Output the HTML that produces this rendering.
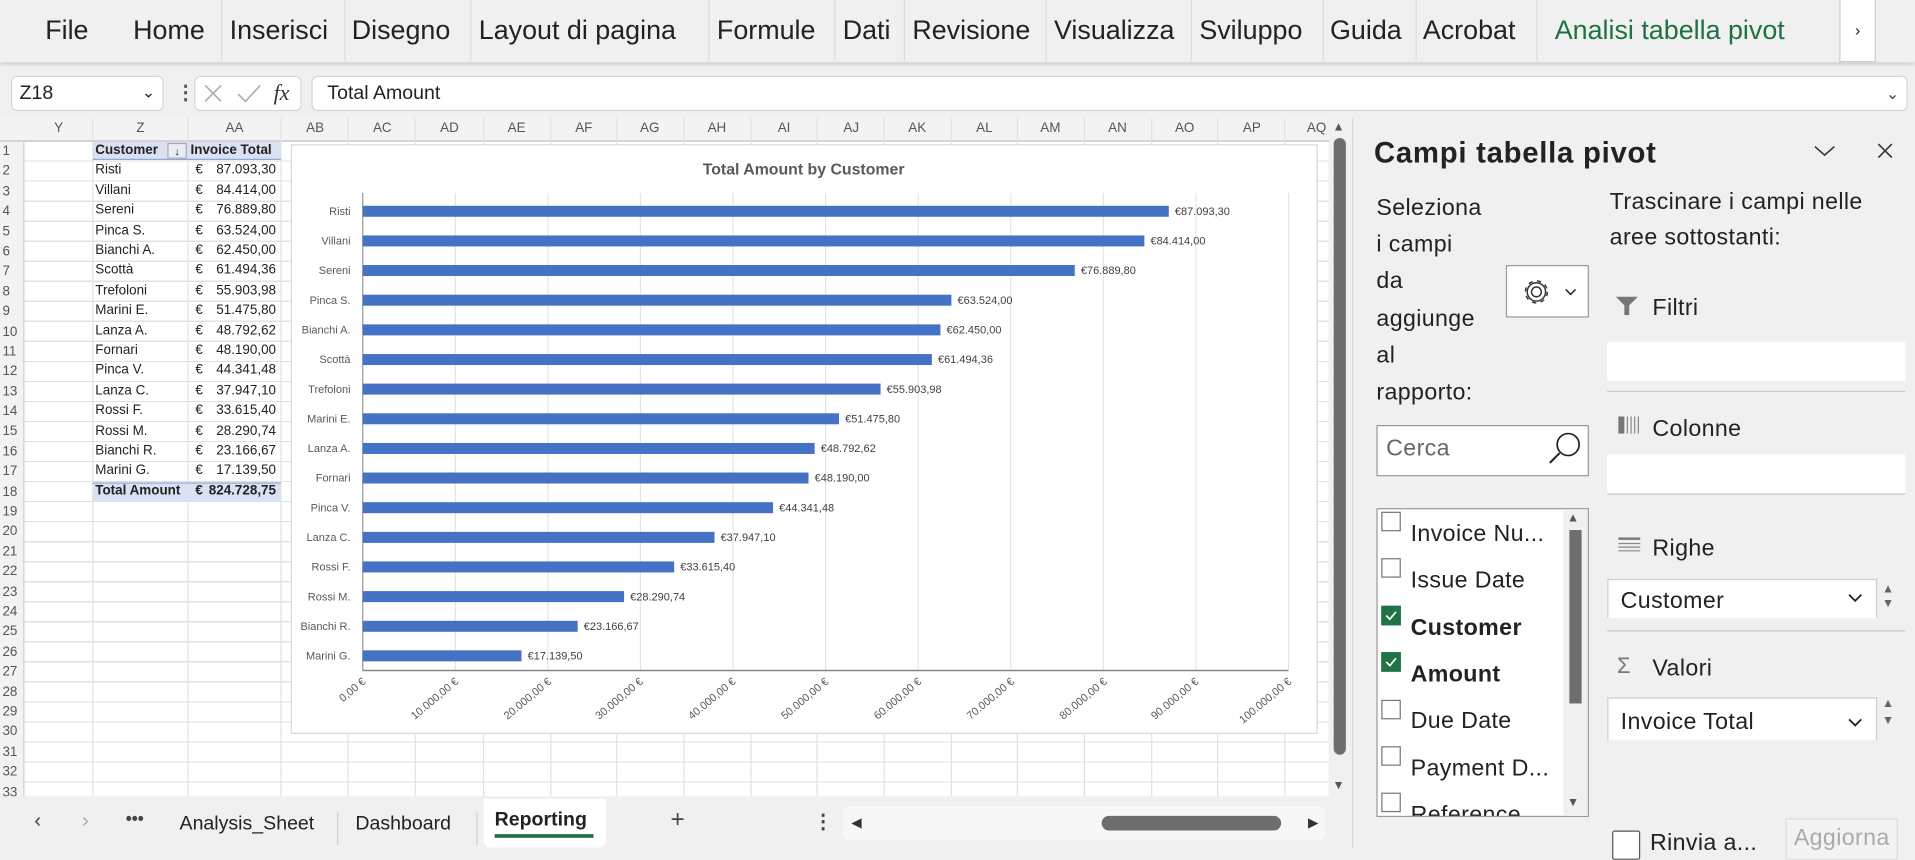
<!DOCTYPE html>
<html><head><meta charset="utf-8"><style>
*{margin:0;padding:0;box-sizing:border-box}
html,body{width:1915px;height:847px;overflow:hidden;background:#f0f0f0}
#w{position:absolute;left:0;top:0;width:1568px;height:694px;transform:scale(1.22131);transform-origin:0 0;font-family:"Liberation Sans",sans-serif;color:#222;background:#f0f0f0}
.a{position:absolute}
.tab{position:absolute;top:12px;font-size:22px;color:#222;white-space:nowrap}
.sep{position:absolute;top:0;width:1px;height:50px;background:#dcdcdc}
.ch{position:absolute;top:99px;font-size:11px;color:#555;width:50px;text-align:center;margin-left:-25px}
.rn{height:16.4px;font-size:11px;color:#555;line-height:16.4px;padding-left:2px}
.cell{position:absolute;font-size:11px;height:16.4px;line-height:16.4px;white-space:nowrap}
.pt{position:absolute;font-size:19px;color:#222;white-space:nowrap;letter-spacing:.3px}
.cb{position:absolute;left:1131px;width:16px;height:16px;border:1.3px solid #777;background:#fff}
.cb.on{background:#217346;border-color:#217346}
</style></head><body><div id="w">

<!-- ribbon -->
<div class="a" style="left:0;top:0;width:1568px;height:51px;background:#f0f0f0;box-shadow:0 2px 3px rgba(0,0,0,.15)"></div>
<div class="tab" style="left:37px">File</div>
<div class="tab" style="left:109px">Home</div><div class="sep" style="left:181px"></div>
<div class="tab" style="left:188px">Inserisci</div><div class="sep" style="left:282px"></div>
<div class="tab" style="left:288px">Disegno</div><div class="sep" style="left:385px"></div>
<div class="tab" style="left:392px">Layout di pagina</div><div class="sep" style="left:580px"></div>
<div class="tab" style="left:587px">Formule</div><div class="sep" style="left:683px"></div>
<div class="tab" style="left:690px">Dati</div><div class="sep" style="left:740px"></div>
<div class="tab" style="left:747px">Revisione</div><div class="sep" style="left:856px"></div>
<div class="tab" style="left:863px">Visualizza</div><div class="sep" style="left:975px"></div>
<div class="tab" style="left:982px">Sviluppo</div><div class="sep" style="left:1083px"></div>
<div class="tab" style="left:1089px">Guida</div><div class="sep" style="left:1159px"></div>
<div class="tab" style="left:1165px">Acrobat</div><div class="sep" style="left:1258px"></div>
<div class="tab" style="left:1273px;color:#1e7145">Analisi tabella pivot</div>
<div class="a" style="left:1506px;top:0;width:30px;height:51px;background:#fff;border:1px solid #ccc;border-top:none;font-size:13px;text-align:center;line-height:50px">›</div>

<!-- formula bar -->
<div class="a" style="left:9px;top:62px;width:125px;height:29px;background:#fff;border:1px solid #d6d6d6;border-radius:5px;font-size:16px;line-height:27px;padding-left:6px">Z18<span style="position:absolute;right:6px;top:-1px;font-size:13px">&#8964;</span></div>
<div class="a" style="left:144px;top:66px;font-size:16px;color:#555;font-weight:bold">⋮</div>
<div class="a" style="left:159px;top:62px;width:88px;height:29px;background:#fff;border:1px solid #d6d6d6;border-radius:5px"></div>
<svg class="a" style="left:165px;top:68px" width="80" height="18"><path d="M3 2L16 15M16 2L3 15" stroke="#aaa" stroke-width="1.3" fill="none"/><path d="M30 9L36 15L48 2" stroke="#aaa" stroke-width="1.3" fill="none"/><text x="59" y="14" font-family="Liberation Serif" font-style="italic" font-size="18" fill="#333">fx</text></svg>
<div class="a" style="left:255px;top:62px;width:1307px;height:29px;background:#fff;border:1px solid #d6d6d6;border-radius:5px;font-size:16px;line-height:27px;padding-left:12px">Total Amount<span style="position:absolute;right:6px;top:0;font-size:13px;color:#444">&#8964;</span></div>

<!-- sheet -->
<div class="a" style="left:0;top:97px;width:1088px;height:555px;background:#fff"></div>
<div class="a" style="left:0;top:97px;width:1088px;height:19px;background:#f3f3f3;border-bottom:1px solid #bdbdbd"></div>
<div class="a" style="left:0;top:116px;width:20px;height:536px;background:#f3f3f3;border-right:1px solid #d0d0d0"></div>
<div class="a" style="left:20px;top:116px;width:1068px;height:536px;background-image:repeating-linear-gradient(to bottom,transparent 0,transparent 15.4px,#e1e1e1 15.4px,#e1e1e1 16.4px)"></div>
<div id="cols"></div>
<div class="a" style="left:0;top:116px;width:20px">
<div class="rn">1</div><div class="rn">2</div><div class="rn">3</div><div class="rn">4</div><div class="rn">5</div><div class="rn">6</div><div class="rn">7</div><div class="rn">8</div><div class="rn">9</div><div class="rn">10</div><div class="rn">11</div><div class="rn">12</div><div class="rn">13</div><div class="rn">14</div><div class="rn">15</div><div class="rn">16</div><div class="rn">17</div><div class="rn">18</div><div class="rn">19</div><div class="rn">20</div><div class="rn">21</div><div class="rn">22</div><div class="rn">23</div><div class="rn">24</div><div class="rn">25</div><div class="rn">26</div><div class="rn">27</div><div class="rn">28</div><div class="rn">29</div><div class="rn">30</div><div class="rn">31</div><div class="rn">32</div><div class="rn">33</div>
</div>
<!-- column lines -->
<svg class="a" style="left:0;top:97px" width="1088" height="555">
<g stroke="#e1e1e1" stroke-width="1">
<line x1="76" y1="0" x2="76" y2="555"/><line x1="154" y1="0" x2="154" y2="555"/><line x1="230" y1="0" x2="230" y2="555"/>
<line x1="285" y1="0" x2="285" y2="555"/><line x1="340" y1="0" x2="340" y2="555"/><line x1="396" y1="0" x2="396" y2="555"/><line x1="451" y1="0" x2="451" y2="555"/><line x1="505" y1="0" x2="505" y2="555"/><line x1="560" y1="0" x2="560" y2="555"/><line x1="615" y1="0" x2="615" y2="555"/><line x1="669" y1="0" x2="669" y2="555"/><line x1="724" y1="0" x2="724" y2="555"/><line x1="779" y1="0" x2="779" y2="555"/><line x1="833" y1="0" x2="833" y2="555"/><line x1="888" y1="0" x2="888" y2="555"/><line x1="943" y1="0" x2="943" y2="555"/><line x1="997" y1="0" x2="997" y2="555"/><line x1="1052" y1="0" x2="1052" y2="555"/>
</g></svg>
<div class="ch" style="left:48px">Y</div><div class="ch" style="left:115px">Z</div><div class="ch" style="left:192px">AA</div>
<div class="ch" style="left:258px">AB</div><div class="ch" style="left:313px">AC</div><div class="ch" style="left:368px">AD</div><div class="ch" style="left:423px">AE</div><div class="ch" style="left:478px">AF</div><div class="ch" style="left:532px">AG</div><div class="ch" style="left:587px">AH</div><div class="ch" style="left:642px">AI</div><div class="ch" style="left:697px">AJ</div><div class="ch" style="left:751px">AK</div><div class="ch" style="left:806px">AL</div><div class="ch" style="left:860px">AM</div><div class="ch" style="left:915px">AN</div><div class="ch" style="left:970px">AO</div><div class="ch" style="left:1025px">AP</div><div class="ch" style="left:1078px">AQ</div>

<!-- pivot table -->
<div class="a" style="left:76px;top:116px;width:154px;height:15.4px;background:#d9e1f2;border-bottom:1px solid #8ea9db"></div>
<div class="a" style="left:137px;top:117px;width:16px;height:13px;border:1px solid #aaa;background:#e8ecf5;font-size:9px;text-align:center;line-height:12px">↓</div>
<div class="a" style="left:76px;top:395px;width:154px;height:16.4px;background:#d9e1f2;border-top:1px solid #8ea9db"></div>
<div class="cell" style="left:78px;top:115px;font-weight:bold">Customer</div>
<div class="cell" style="left:156px;top:115px;font-weight:bold">Invoice Total</div>
<div id="tbl"></div>
<div class="a" style="left:78px;top:131.4px;font-size:11px;line-height:16.4px">Risti<br>Villani<br>Sereni<br>Pinca S.<br>Bianchi A.<br>Scottà<br>Trefoloni<br>Marini E.<br>Lanza A.<br>Fornari<br>Pinca V.<br>Lanza C.<br>Rossi F.<br>Rossi M.<br>Bianchi R.<br>Marini G.<br><b>Total Amount</b></div>
<div class="a" style="left:160px;top:131.4px;font-size:11px;line-height:16.4px">€<br>€<br>€<br>€<br>€<br>€<br>€<br>€<br>€<br>€<br>€<br>€<br>€<br>€<br>€<br>€<br><b>€</b></div>
<div class="a" style="left:166px;width:60px;text-align:right;top:131.4px;font-size:11px;line-height:16.4px">87.093,30<br>84.414,00<br>76.889,80<br>63.524,00<br>62.450,00<br>61.494,36<br>55.903,98<br>51.475,80<br>48.792,62<br>48.190,00<br>44.341,48<br>37.947,10<br>33.615,40<br>28.290,74<br>23.166,67<br>17.139,50<br><b>824.728,75</b></div>

<!-- chart -->
<svg class="a" style="left:238px;top:118px" width="842" height="484" font-family="Liberation Sans,sans-serif">
<rect x="0.5" y="0.5" width="840" height="482" fill="#fff" stroke="#d9d9d9"/>
<text x="420" y="25" text-anchor="middle" font-size="13" font-weight="bold" fill="#595959">Total Amount by Customer</text>
<g transform="translate(59,0)">
<g stroke="#e4e4e4"><line x1="75.8" y1="40" x2="75.8" y2="431"/><line x1="151.6" y1="40" x2="151.6" y2="431"/><line x1="227.4" y1="40" x2="227.4" y2="431"/><line x1="303.2" y1="40" x2="303.2" y2="431"/><line x1="379" y1="40" x2="379" y2="431"/><line x1="454.8" y1="40" x2="454.8" y2="431"/><line x1="530.6" y1="40" x2="530.6" y2="431"/><line x1="606.4" y1="40" x2="606.4" y2="431"/><line x1="682.2" y1="40" x2="682.2" y2="431"/><line x1="758" y1="40" x2="758" y2="431"/></g>
<line x1="0" y1="40" x2="0" y2="431" stroke="#999"/>
<line x1="0" y1="431" x2="758" y2="431" stroke="#888" stroke-width="1.2"/>
<g fill="#4472c4">
<rect x="0" y="50.5" width="660" height="9"/><rect x="0" y="74.8" width="640" height="9"/><rect x="0" y="99" width="583" height="9"/><rect x="0" y="123.3" width="482" height="9"/><rect x="0" y="147.6" width="473" height="9"/><rect x="0" y="171.9" width="466" height="9"/><rect x="0" y="196.1" width="424" height="9"/><rect x="0" y="220.4" width="390" height="9"/><rect x="0" y="244.7" width="370" height="9"/><rect x="0" y="268.9" width="365" height="9"/><rect x="0" y="293.2" width="336" height="9"/><rect x="0" y="317.5" width="288" height="9"/><rect x="0" y="341.7" width="255" height="9"/><rect x="0" y="366" width="214" height="9"/><rect x="0" y="390.3" width="176" height="9"/><rect x="0" y="414.5" width="130" height="9"/>
</g>
<g font-size="9" fill="#404040">
<text x="665" y="58">€87.093,30</text><text x="645" y="82.3">€84.414,00</text><text x="588" y="106.5">€76.889,80</text><text x="487" y="130.8">€63.524,00</text><text x="478" y="155.1">€62.450,00</text><text x="471" y="179.4">€61.494,36</text><text x="429" y="203.6">€55.903,98</text><text x="395" y="227.9">€51.475,80</text><text x="375" y="252.2">€48.792,62</text><text x="370" y="276.4">€48.190,00</text><text x="341" y="300.7">€44.341,48</text><text x="293" y="325">€37.947,10</text><text x="260" y="349.2">€33.615,40</text><text x="219" y="373.5">€28.290,74</text><text x="181" y="397.8">€23.166,67</text><text x="135" y="422">€17.139,50</text>
</g>
<g font-size="9" fill="#595959" text-anchor="end">
<text x="-10" y="58">Risti</text><text x="-10" y="82.3">Villani</text><text x="-10" y="106.5">Sereni</text><text x="-10" y="130.8">Pinca S.</text><text x="-10" y="155.1">Bianchi A.</text><text x="-10" y="179.4">Scottà</text><text x="-10" y="203.6">Trefoloni</text><text x="-10" y="227.9">Marini E.</text><text x="-10" y="252.2">Lanza A.</text><text x="-10" y="276.4">Fornari</text><text x="-10" y="300.7">Pinca V.</text><text x="-10" y="325">Lanza C.</text><text x="-10" y="349.2">Rossi F.</text><text x="-10" y="373.5">Rossi M.</text><text x="-10" y="397.8">Bianchi R.</text><text x="-10" y="422">Marini G.</text>
</g>
<g font-size="9" fill="#595959" text-anchor="end">
<text transform="translate(3,441) rotate(-40)">0,00 €</text>
<text transform="translate(79,441) rotate(-40)">10.000,00 €</text>
<text transform="translate(155,441) rotate(-40)">20.000,00 €</text>
<text transform="translate(230,441) rotate(-40)">30.000,00 €</text>
<text transform="translate(306,441) rotate(-40)">40.000,00 €</text>
<text transform="translate(382,441) rotate(-40)">50.000,00 €</text>
<text transform="translate(458,441) rotate(-40)">60.000,00 €</text>
<text transform="translate(534,441) rotate(-40)">70.000,00 €</text>
<text transform="translate(610,441) rotate(-40)">80.000,00 €</text>
<text transform="translate(685,441) rotate(-40)">90.000,00 €</text>
<text transform="translate(761,441) rotate(-40)">100.000,00 €</text>
</g></g></svg>

<!-- vertical scrollbar -->
<div class="a" style="left:1088px;top:97px;width:17px;height:555px;background:#f0f0f0"></div>
<div class="a" style="left:1092px;top:113px;width:10px;height:505px;background:#6e6e6e;border-radius:5px"></div>
<div class="a" style="left:1091px;top:99px;font-size:10px;color:#555">▲</div>
<div class="a" style="left:1091px;top:638px;font-size:10px;color:#555">▼</div>

<!-- bottom tabs -->
<div class="a" style="left:0;top:652px;width:1088px;height:42px;background:#f0f0f0"></div>
<div class="a" style="left:28px;top:662px;font-size:17px;color:#444">‹</div>
<div class="a" style="left:67px;top:662px;font-size:17px;color:#aaa">›</div>
<div class="a" style="left:103px;top:662px;font-size:14px;font-weight:bold;color:#444">•••</div>
<div class="a" style="left:147px;top:666px;font-size:16px">Analysis_Sheet</div>
<div class="a" style="left:276px;top:665px;width:1px;height:27px;background:#d0d0d0"></div>
<div class="a" style="left:291px;top:666px;font-size:16px">Dashboard</div>
<div class="a" style="left:390px;top:665px;width:1px;height:27px;background:#d0d0d0"></div>
<div class="a" style="left:396px;top:654px;width:100px;height:40px;background:#fff;border-radius:0 0 6px 6px"></div>
<div class="a" style="left:405px;top:663px;font-size:16px;font-weight:bold;color:#222">Reporting</div>
<div class="a" style="left:405px;top:683px;width:81px;height:3px;background:#1e7145"></div>
<div class="a" style="left:549px;top:660px;font-size:20px;color:#444">+</div>
<div class="a" style="left:666px;top:663px;font-size:16px;font-weight:bold;color:#444">⋮</div>
<div class="a" style="left:690px;top:660px;width:395px;height:28px;background:#f7f7f7;border-radius:6px"></div>
<div class="a" style="left:902px;top:668px;width:147px;height:12px;background:#6e6e6e;border-radius:6px"></div>
<div class="a" style="left:697px;top:667px;font-size:11px;color:#333">◀</div>
<div class="a" style="left:1071px;top:667px;font-size:11px;color:#333">▶</div>

<!-- pivot pane -->
<div class="a" style="left:1107px;top:97px;width:461px;height:597px;background:#f0f0f0;border-left:1px solid #d8d8d8"></div>
<div class="a" style="left:1125px;top:112px;font-size:24px;font-weight:bold;color:#222;letter-spacing:.6px">Campi tabella pivot</div>
<svg class="a" style="left:1484px;top:115px" width="70" height="20"><path d="M2 5L10 12L18 5" stroke="#333" stroke-width="1.3" fill="none"/><path d="M54 3L65 14M65 3L54 14" stroke="#333" stroke-width="1.3"/></svg>
<div class="pt" style="left:1127px;top:156px;line-height:30.2px">Seleziona<br>i campi<br>da<br>aggiunge<br>al<br>rapporto:</div>
<div class="a" style="left:1233px;top:217px;width:68px;height:43px;border:1px solid #999;background:#fff"></div>
<svg class="a" style="left:1244px;top:226px" width="52" height="26"><circle cx="14" cy="13" r="4" fill="none" stroke="#333" stroke-width="1.2"/><circle cx="14" cy="13" r="9" fill="none" stroke="#333" stroke-width="1.2" stroke-dasharray="3.5 3.6"/><circle cx="14" cy="13" r="7.5" fill="none" stroke="#333" stroke-width="1.2"/><path d="M38 11L42 15L46 11" stroke="#333" stroke-width="1.4" fill="none"/></svg>
<div class="a" style="left:1127px;top:348px;width:174px;height:42px;border:1px solid #999;background:#fff;font-size:19px;color:#666;padding:8px 0 0 7px;letter-spacing:.3px">Cerca</div>
<svg class="a" style="left:1266px;top:352px" width="32" height="32"><circle cx="18" cy="12" r="9" fill="none" stroke="#222" stroke-width="1.4"/><path d="M11 19L3 27" stroke="#222" stroke-width="1.6"/></svg>
<div class="a" style="left:1127px;top:416px;width:174px;height:253px;border:1px solid #999;background:#fff;overflow:hidden"></div>
<div class="a" style="left:1280px;top:417px;width:20px;height:251px;background:#f0f0f0"></div>
<div class="a" style="left:1285px;top:434px;width:10px;height:142px;background:#6e6e6e"></div>
<div class="a" style="left:1283px;top:419px;font-size:10px;color:#555">▲</div>
<div class="a" style="left:1283px;top:652px;font-size:10px;color:#555">▼</div>
<div class="cb" style="top:419px"></div><div class="pt" style="left:1155px;top:427px">Invoice Nu...</div>
<div class="cb" style="top:457px"></div><div class="pt" style="left:1155px;top:465px">Issue Date</div>
<div class="cb on" style="top:496px"><svg width="14" height="14" style="position:absolute;left:0;top:0"><path d="M3 7L6 10L11 4" stroke="#fff" stroke-width="1.4" fill="none"/></svg></div><div class="pt" style="left:1155px;top:504px;font-weight:bold">Customer</div>
<div class="cb on" style="top:534px"><svg width="14" height="14" style="position:absolute;left:0;top:0"><path d="M3 7L6 10L11 4" stroke="#fff" stroke-width="1.4" fill="none"/></svg></div><div class="pt" style="left:1155px;top:542px;font-weight:bold">Amount</div>
<div class="cb" style="top:573px"></div><div class="pt" style="left:1155px;top:580px">Due Date</div>
<div class="cb" style="top:611px"></div><div class="pt" style="left:1155px;top:619px">Payment D...</div>
<div class="a" style="left:1128px;top:646px;width:152px;height:22px;overflow:hidden"><div class="cb" style="left:3px;top:3px"></div><div class="pt" style="left:27px;top:11px">Reference</div></div>

<div class="pt" style="left:1318px;top:151px;line-height:29px">Trascinare i campi nelle<br>aree sottostanti:</div>
<svg class="a" style="left:1322px;top:242px" width="22" height="18"><path d="M1 1H19L12 8V16H8V8Z" fill="#777"/></svg>
<div class="pt" style="left:1353px;top:242px">Filtri</div>
<div class="a" style="left:1316px;top:280px;width:244px;height:32px;background:#fff"></div>
<div class="a" style="left:1316px;top:320px;width:244px;height:1px;background:#c8c8c8"></div>
<svg class="a" style="left:1325px;top:341px" width="20" height="16"><rect x="0" y="0" width="5" height="14" fill="#777"/><g stroke="#888"><line x1="7.5" y1="0" x2="7.5" y2="14"/><line x1="10.5" y1="0" x2="10.5" y2="14"/><line x1="13.5" y1="0" x2="13.5" y2="14"/><line x1="16.5" y1="0" x2="16.5" y2="14"/></g></svg>
<div class="pt" style="left:1353px;top:341px">Colonne</div>
<div class="a" style="left:1316px;top:343px;width:244px;height:0"></div>
<div class="a" style="left:1316px;top:374px;width:244px;height:32px;background:#fff;display:none"></div>
<div class="a" style="left:1316px;top:372px;width:244px;height:32px;background:#fff"></div>
<div class="a" style="left:1316px;top:404px;width:244px;height:1px;background:#c8c8c8"></div>
<svg class="a" style="left:1325px;top:440px" width="20" height="14"><g stroke="#888"><line x1="0" y1="1" x2="18" y2="1" stroke-width="2" stroke="#777"/><line x1="0" y1="5" x2="18" y2="5"/><line x1="0" y1="8" x2="18" y2="8"/><line x1="0" y1="11" x2="18" y2="11"/></g></svg>
<div class="pt" style="left:1353px;top:439px">Righe</div>
<div class="a" style="left:1316px;top:474px;width:221px;height:32px;background:#fff;border:1px solid #ccc;border-bottom:none;font-size:19px;padding:7px 0 0 10px;letter-spacing:.3px">Customer</div>
<svg class="a" style="left:1512px;top:485px" width="14" height="10"><path d="M2 2L7 7L12 2" stroke="#222" stroke-width="1.5" fill="none"/></svg>
<div class="a" style="left:1541px;top:477px;font-size:10px;color:#666;line-height:12px">▲<br>▼</div>
<div class="a" style="left:1316px;top:516px;width:244px;height:1px;background:#c8c8c8"></div>
<div class="a" style="left:1324px;top:535px;font-size:18px;color:#777">Σ</div>
<div class="pt" style="left:1353px;top:537px">Valori</div>
<div class="a" style="left:1316px;top:571px;width:221px;height:35px;background:#fff;border:1px solid #ccc;border-bottom:none;font-size:19px;padding:9px 0 0 10px;letter-spacing:.3px">Invoice Total</div>
<svg class="a" style="left:1512px;top:587px" width="14" height="10"><path d="M2 2L7 7L12 2" stroke="#222" stroke-width="1.5" fill="none"/></svg>
<div class="a" style="left:1541px;top:570px;font-size:10px;color:#666;line-height:14px">▲<br>▼</div>
<div class="a" style="left:1320px;top:680px;width:23px;height:24px;border:1.3px solid #555;background:#fff;border-radius:2px"></div>
<div class="pt" style="left:1351px;top:680px">Rinvia a...</div>
<div class="a" style="left:1462px;top:670px;width:92px;height:34px;border:1px solid #ddd;background:#f3f3f3;font-size:19px;color:#aaa;text-align:center;line-height:32px;letter-spacing:.3px">Aggiorna</div>
</div></body></html>
